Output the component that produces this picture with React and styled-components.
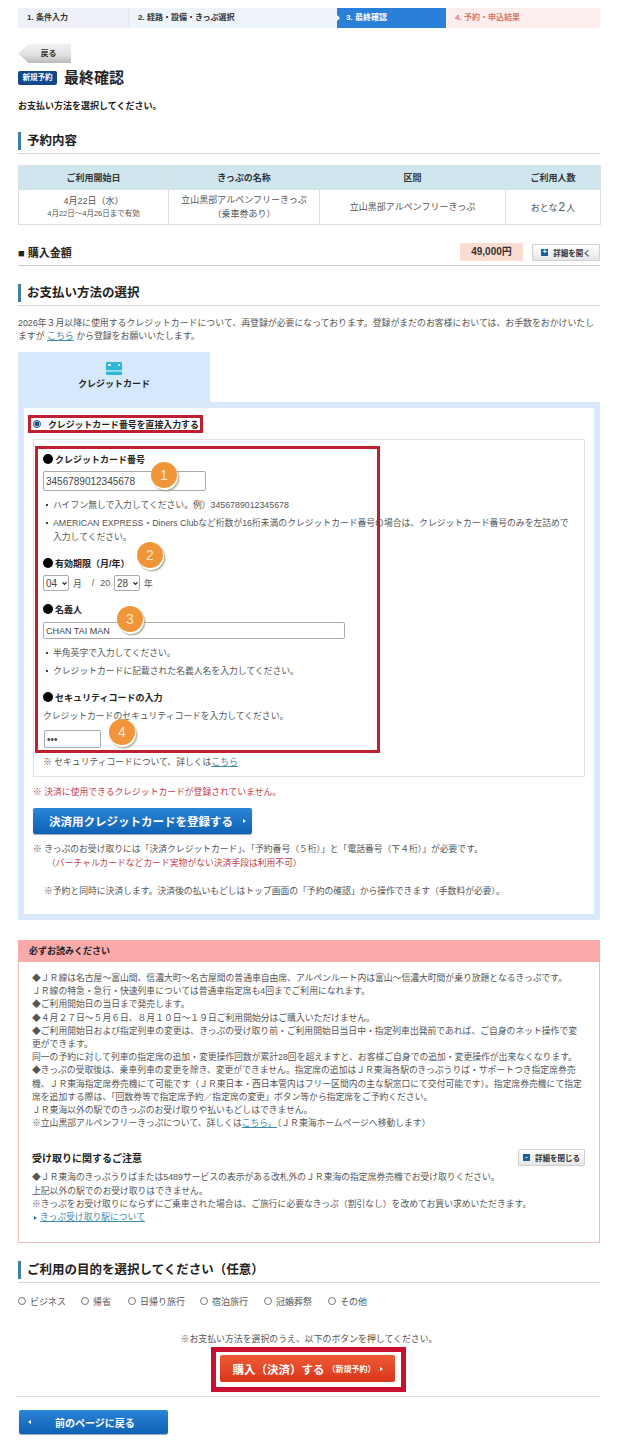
import React from "react";
import styled, { createGlobalStyle } from "styled-components";
import { ChevronDown } from "lucide-react";

const Global = createGlobalStyle`
  html, body { margin: 0; padding: 0; background: #fff; }
  body { font-family: "Liberation Sans", "Noto Sans CJK JP", sans-serif; color: #555; font-size: 8.8px; }
  * { box-sizing: border-box; }
`;

const Page = styled.div`
  width: 620px;
  padding: 8px 20px 7px 18px;
`;

const Steps = styled.ol`
  display: flex;
  height: 20px;
  margin: 0;
  padding: 0;
  list-style: none;
`;
const Step = styled.li`
  position: relative;
  width: ${p => p.$w}px;
  padding-left: 9px;
  background: ${p => p.$bg};
  color: ${p => p.$fg};
  border-left: ${p => (p.$sep ? "1px solid #e3e8f0" : "none")};
  font-size: 8px;
  font-weight: 700;
  line-height: 20px;
  ${p => p.$active && `
    &::before, &::after {
      content: "";
      position: absolute;
      top: 7px;
      border: 3px solid transparent;
      border-left-color: #2a80d8;
    }
    &::before { left: 0; border-left-color: #fff; }
    &::after { right: -6px; }
  `}
`;

const BackTab = styled.button`
  display: block;
  width: 53px;
  height: 19px;
  margin-top: 16px;
  padding: 0 0 2px 8px;
  border: 0;
  background: linear-gradient(#f1f1f1, #e3e3e3 55%, #b9b9b9);
  clip-path: polygon(0 50%, 20% 0, 100% 0, 100% 100%, 20% 100%);
  color: #333;
  font: 700 8px "Liberation Sans", "Noto Sans CJK JP", sans-serif;
`;

const TitleRow = styled.div`
  display: flex;
  align-items: center;
  gap: 7px;
  height: 14px;
  margin-top: 8px;
`;
const Badge = styled.span`
  width: 39px;
  height: 14px;
  background: #12478c;
  border-radius: 2px;
  color: #fff;
  font-size: 7.5px;
  font-weight: 700;
  line-height: 14px;
  text-align: center;
`;
const Title = styled.h1`
  margin: 0;
  color: #222;
  font-size: 15px;
  font-weight: 700;
  line-height: 14px;
`;
const Lead = styled.p`
  margin: 15px 0 0;
  color: #222;
  font-size: 9px;
  font-weight: 700;
  line-height: 12px;
`;

const Heading = styled.h2`
  margin: ${p => p.$top}px 0 0;
  padding-bottom: 3px;
  border-bottom: 1px solid #d8d8d8;
  color: #222;
  font-size: 12.5px;
  font-weight: 700;
  line-height: 18px;
`;
const HeadingText = styled.span`
  display: block;
  padding-left: 6px;
  border-left: 3px solid #3f7fa8;
`;

const Table = styled.table`
  width: 582px;
  margin-top: 11px;
  border-collapse: collapse;
  table-layout: fixed;
  text-align: center;
`;
const Th = styled.th`
  width: ${p => p.$w}px;
  height: 24px;
  padding: 0;
  background: #cfe6ef;
  border: 1px solid #d9e3e6;
  color: #333;
  font-size: 9px;
  font-weight: 700;
`;
const Td = styled.td`
  height: 35px;
  padding: 0;
  border: 1px solid #d9dde0;
  color: #555;
  font-size: 9px;
  line-height: 14px;
`;
const Small = styled.small`
  display: block;
  font-size: 7.5px;
  line-height: 12px;
`;
const BigNum = styled.span`
  margin: 0 1px;
  font-size: 12px;
`;

const PriceRow = styled.div`
  display: flex;
  align-items: center;
  height: 23px;
  margin-top: 18px;
  padding-bottom: 4px;
  border-bottom: 1px solid #c8c8c8;
`;
const PriceLabel = styled.h3`
  flex: 1;
  margin: 0;
  color: #222;
  font-size: 11px;
  font-weight: 700;
`;
const Price = styled.span`
  width: 63px;
  height: 18px;
  margin-right: 9px;
  background: #fbdcd0;
  border-radius: 2px;
  color: #333;
  font-size: 10px;
  font-weight: 700;
  line-height: 18px;
  text-align: center;
`;
const DetailBtn = styled.button`
  display: flex;
  align-items: center;
  justify-content: center;
  gap: 5px;
  width: ${p => p.$w}px;
  height: ${p => p.$h}px;
  padding: 0;
  background: linear-gradient(#fff, #e6e6e6);
  border: 1px solid #d0d0d0;
  border-radius: 1px;
  color: #333;
  font: 700 7.5px "Liberation Sans", "Noto Sans CJK JP", sans-serif;
`;
const ToggleIcon = styled.span`
  width: 7px;
  height: 7px;
  background: #1c5f9e;
  color: #fff;
  font-size: 7px;
  line-height: 6px;
  text-align: center;
`;

const Para = styled.p`
  margin: 11px 0 0;
  color: #555;
  font-size: 8.9px;
  line-height: 13px;
  white-space: nowrap;
`;
const A = styled.a`
  color: #3f8aa8;
  text-decoration: underline;
`;

const Tab = styled.div`
  display: flex;
  flex-direction: column;
  align-items: center;
  width: 192px;
  height: 50px;
  margin-top: 9px;
  padding-top: 10px;
  background: #d6e8fb;
  color: #222;
  font-size: 9px;
  font-weight: 700;
  line-height: 12px;
`;
const TabLabel = styled.span`
  margin-top: 3px;
`;

const Panel = styled.section`
  padding: 7px 9px 16px 9px;
  border: 6px solid #d9e8fb;
`;
const RadioRow = styled.label`
  display: flex;
  align-items: center;
  gap: 7px;
  width: 175px;
  height: 18px;
  margin-left: -5px;
  padding-left: 2px;
  border: 3px solid #bf2030;
  color: #222;
  font-size: 8.9px;
  font-weight: 700;
  white-space: nowrap;
`;
const Radio = styled.input`
  flex: none;
  width: 8px;
  height: 8px;
  margin: 0;
  accent-color: #1c4f8e;
`;
const Box = styled.div`
  position: relative;
  margin-top: 6px;
  padding: 13px 8px 7px 9px;
  border: 1px solid #e2e2e2;
`;
const RedFrame = styled.div`
  position: absolute;
  left: 1px;
  top: 6px;
  width: 345px;
  height: 307px;
  border: 3px solid #bf2030;
  pointer-events: none;
`;
const Circle = styled.span`
  position: absolute;
  left: ${p => p.$x}px;
  top: ${p => p.$y}px;
  width: 26px;
  height: 26px;
  background: #f0953a;
  border-radius: 50%;
  box-shadow: 1px 2px 0 #fff, 2px 3px 2px #9a9a7a;
  color: #fbe6c8;
  font-size: 14px;
  line-height: 26px;
  text-align: center;
`;
const FieldLabel = styled.div`
  display: flex;
  align-items: center;
  height: 12px;
  margin-top: ${p => p.$top || 0}px;
  color: #222;
  font-size: 9px;
  font-weight: 700;
`;
const Dot = styled.span`
  width: 10px;
  height: 10px;
  margin-right: 2px;
  background: #000;
  border-radius: 50%;
`;
const TextInput = styled.input`
  display: block;
  width: ${p => p.$w}px;
  height: ${p => p.$h}px;
  margin: ${p => p.$top}px 0 0 ${p => p.$left || 0}px;
  padding: 0 2px;
  background: #fff;
  border: 1px solid #aaa;
  border-radius: 2px;
  color: #444;
  font: ${p => p.$fs || 10}px "Liberation Sans", sans-serif;
`;
const Bullets = styled.ul`
  margin: 7px 0 0;
  padding: 0 0 0 10px;
  list-style: none;
  line-height: 14px;
  white-space: nowrap;
`;
const Bullet = styled.li`
  position: relative;
  & + & { margin-top: 4px; }
  &::before {
    content: "";
    position: absolute;
    left: -7px;
    top: 6px;
    width: 2px;
    height: 2px;
    background: #444;
  }
`;
const DateRow = styled.div`
  display: flex;
  align-items: center;
  height: 16px;
  margin-top: 6px;
  gap: 4px;
`;
const SelectWrap = styled.span`
  position: relative;
  display: block;
  width: 26px;
  height: 16px;
  color: #222;
  & > svg {
    position: absolute;
    right: 1px;
    top: 5px;
    pointer-events: none;
  }
`;
const Select = styled.select`
  display: block;
  width: 100%;
  height: 100%;
  padding: 0 0 0 2px;
  appearance: none;
  background: #fff;
  border: 1px solid #aaa;
  border-radius: 2px;
  color: #444;
  font: 10px "Liberation Sans", sans-serif;
`;
const Sep = styled.span`
  margin: 0 2px 0 6px;
`;
const Line = styled.p`
  margin: ${p => p.$top || 0}px 0 0 ${p => p.$left || 0}px;
  color: ${p => (p.$red ? "#c0404f" : "#555")};
  line-height: 14px;
`;
const RedSpan = styled.span`
  display: block;
  padding-left: 14px;
  color: #c0404f;
`;
const BlueBtn = styled.button`
  display: flex;
  align-items: center;
  width: ${p => p.$w}px;
  height: ${p => p.$h}px;
  margin-top: ${p => p.$top}px;
  padding: 0 0 0 ${p => p.$pad}px;
  background: linear-gradient(#2a84d8, #0f62b4);
  border: 0;
  border-radius: 2px;
  box-shadow: 0 1px 1px #9ab;
  color: #fff;
  font: 700 ${p => p.$fs}px "Liberation Sans", "Noto Sans CJK JP", sans-serif;
`;
const Tri = styled.i`
  flex: none;
  width: 0;
  height: 0;
  border: 2.5px solid transparent;
  ${p => (p.$left
    ? `border-right: 3px solid #fff; margin-right: 24px; border-left: 0;`
    : `border-left: 3px solid #fff; margin-left: ${p.$m}px; border-right: 0;`)}
`;

const Notice = styled.section`
  margin-top: 20px;
  padding-bottom: 18px;
  border: 1px solid #f1bcbc;
  border-top: 0;
`;
const NoticeHead = styled.h3`
  height: 22px;
  margin: 0 -1px;
  padding-left: 11px;
  background: #fbaaaa;
  color: #222;
  font-size: 9px;
  font-weight: 700;
  line-height: 22px;
`;
const NoticeText = styled.div`
  margin-top: ${p => p.$top}px;
  padding: 0 13px;
  color: #555;
  line-height: 13.2px;
  white-space: nowrap;
`;
const NoticeSubHead = styled.div`
  display: flex;
  align-items: center;
  justify-content: space-between;
  height: 17px;
  margin-top: 19px;
  padding: 0 14px 0 13px;
  color: #222;
  font-size: 10px;
  font-weight: 700;
`;
const LinkTri = styled.i`
  display: inline-block;
  margin: 0 3px 0 2px;
  border: 2px solid transparent;
  border-left: 3px solid #2a6fa8;
  border-right: 0;
`;

const Purposes = styled.div`
  display: flex;
  height: 16px;
  margin-top: 10px;
  font-size: 9px;
`;
const Purpose = styled.label`
  display: flex;
  align-items: center;
  gap: 4px;
  width: ${p => p.$w}px;
`;
const CenterNote = styled.p`
  margin: 24px 0 0;
  font-size: 8.9px;
  line-height: 12px;
  text-align: center;
`;
const BuyFrame = styled.div`
  width: 195px;
  height: 45px;
  margin: 2px 0 0 193px;
  padding: 3px 4px;
  border: 5px solid #c8102e;
`;
const BuyBtn = styled.button`
  display: flex;
  align-items: center;
  justify-content: center;
  width: 175px;
  height: 27px;
  padding: 0;
  background: linear-gradient(#ee5a34, #d9371c);
  border: 0;
  border-radius: 2px;
  color: #fff;
  font: 700 11.5px "Liberation Sans", "Noto Sans CJK JP", sans-serif;
`;
const BuySub = styled.span`
  margin-left: 3px;
  font-size: 8px;
`;
const Divider = styled.hr`
  height: 1px;
  margin: 4px 0 0 -2px;
  border: 0;
  background: #e0e0e0;
`;
const BackWrap = styled.div`
  margin-left: 1px;
`;

const CardIcon = () => (
  <svg width="16" height="13" viewBox="0 0 16 13" aria-hidden="true">
    <rect width="16" height="13" rx="1" fill="#2fb5d8" />
    <rect y="8" width="16" height="2" fill="#8fdcec" />
    <rect x="2" y="2" width="3" height="2" fill="#d8f4fa" />
    <rect x="12" y="2" width="2" height="2" fill="#d8f4fa" />
  </svg>
);

const Toggle = ({ open, children, w, h }) => (
  <DetailBtn $w={w} $h={h} type="button">
    <ToggleIcon>{open ? "-" : "+"}</ToggleIcon>
    {children}
  </DetailBtn>
);

const DateSelect = ({ value }) => (
  <SelectWrap>
    <Select defaultValue={value}><option>{value}</option></Select>
    <ChevronDown size={7} strokeWidth={4} />
  </SelectWrap>
);

export default function App() {
  return (
    <Page>
      <Global />
      <Steps>
        <Step $w={110} $bg="#eef1f8" $fg="#333">1. 条件入力</Step>
        <Step $w={209} $bg="#eff4fb" $fg="#333" $sep>2. 経路・設備・きっぷ選択</Step>
        <Step $w={109} $bg="#2a80d8" $fg="#fff" $active>3. 最終確認</Step>
        <Step $w={154} $bg="#fdeeee" $fg="#d77a6a">4. 予約・申込結果</Step>
      </Steps>

      <BackTab type="button">戻る</BackTab>
      <TitleRow>
        <Badge>新規予約</Badge>
        <Title>最終確認</Title>
      </TitleRow>
      <Lead>お支払い方法を選択してください。</Lead>

      <Heading $top={20}><HeadingText>予約内容</HeadingText></Heading>
      <Table>
        <thead>
          <tr>
            <Th $w={150}>ご利用開始日</Th>
            <Th $w={151}>きっぷの名称</Th>
            <Th $w={186}>区間</Th>
            <Th $w={95}>ご利用人数</Th>
          </tr>
        </thead>
        <tbody>
          <tr>
            <Td>4月22日（水）<Small>4月22日～4月26日まで有効</Small></Td>
            <Td>立山黒部アルペンフリーきっぷ<br />（乗車券あり）</Td>
            <Td>立山黒部アルペンフリーきっぷ</Td>
            <Td>おとな<BigNum>2</BigNum>人</Td>
          </tr>
        </tbody>
      </Table>

      <PriceRow>
        <PriceLabel>■ 購入金額</PriceLabel>
        <Price>49,000円</Price>
        <Toggle w={68} h={17}>詳細を開く</Toggle>
      </PriceRow>

      <Heading $top={18}><HeadingText>お支払い方法の選択</HeadingText></Heading>
      <Para>
        2026年３月以降に使用するクレジットカードについて、再登録が必要になっております。登録がまだのお客様においては、お手数をおかけいたし<br />
        ますが <A href="#">こちら</A> から登録をお願いいたします。
      </Para>

      <Tab>
        <CardIcon />
        <TabLabel>クレジットカード</TabLabel>
      </Tab>
      <Panel>
        <RadioRow>
          <Radio type="radio" name="pay" defaultChecked />
          クレジットカード番号を直接入力する
        </RadioRow>
        <Box>
          <FieldLabel><Dot />クレジットカード番号</FieldLabel>
          <TextInput $w={163} $h={20} $top={6} defaultValue="3456789012345678" />
          <Bullets>
            <Bullet>ハイフン無しで入力してください。例）3456789012345678</Bullet>
            <Bullet>AMERICAN EXPRESS・Diners Clubなど桁数が16桁未満のクレジットカード番号の場合は、クレジットカード番号のみを左詰めで<br />入力してください。</Bullet>
          </Bullets>

          <FieldLabel $top={13}><Dot />有効期限（月/年）</FieldLabel>
          <DateRow>
            <DateSelect value="04" />
            月<Sep>/</Sep>20
            <DateSelect value="28" />
            年
          </DateRow>

          <FieldLabel $top={12}><Dot />名義人</FieldLabel>
          <TextInput $w={302} $h={17} $top={7} $fs={9} defaultValue="CHAN TAI MAN" />
          <Bullets>
            <Bullet>半角英字で入力してください。</Bullet>
            <Bullet>クレジットカードに記載された名義人名を入力してください。</Bullet>
          </Bullets>

          <FieldLabel $top={13}><Dot />セキュリティコードの入力</FieldLabel>
          <Line $top={6}>クレジットカードのセキュリティコードを入力してください。</Line>
          <TextInput type="password" $w={57} $h={18} $top={7} $left={1} defaultValue="123" />
          <Line $top={7}>※ セキュリティコードについて、詳しくは<A href="#">こちら</A></Line>

          <RedFrame />
          <Circle $x={117} $y={22}>1</Circle>
          <Circle $x={103} $y={102}>2</Circle>
          <Circle $x={83} $y={166}>3</Circle>
          <Circle $x={75} $y={279}>4</Circle>
        </Box>

        <Line $top={8} $red>※ 決済に使用できるクレジットカードが登録されていません。</Line>
        <BlueBtn type="button" $w={219} $h={26} $top={9} $pad={16} $fs={11.5}>
          決済用クレジットカードを登録する<Tri $m={10} />
        </BlueBtn>
        <Line $top={8}>
          ※ きっぷのお受け取りには「決済クレジットカード」、「予約番号（５桁）」と「電話番号（下４桁）」が必要です。
          <RedSpan>（バーチャルカードなどカード実物がない決済手段は利用不可）</RedSpan>
        </Line>
        <Line $top={14} $left={11}>※予約と同時に決済します。決済後の払いもどしはトップ画面の「予約の確認」から操作できます（手数料が必要）。</Line>
      </Panel>

      <Notice>
        <NoticeHead>必ずお読みください</NoticeHead>
        <NoticeText $top={10}>
          ◆ＪＲ線は名古屋～富山間、信濃大町～名古屋間の普通車自由席、アルペンルート内は富山～信濃大町間が乗り放題となるきっぷです。<br />
          ＪＲ線の特急・急行・快速列車については普通車指定席も4回までご利用になれます。<br />
          ◆ご利用開始日の当日まで発売します。<br />
          ◆４月２７日～５月６日、８月１０日～１９日ご利用開始分はご購入いただけません。<br />
          ◆ご利用開始日および指定列車の変更は、きっぷの受け取り前・ご利用開始日当日中・指定列車出発前であれば、ご自身のネット操作で変<br />
          更ができます。<br />
          同一の予約に対して列車の指定席の追加・変更操作回数が累計28回を超えますと、お客様ご自身での追加・変更操作が出来なくなります。<br />
          ◆きっぷの受取後は、乗車列車の変更を除き、変更ができません。指定席の追加はＪＲ東海各駅のきっぷうりば・サポートつき指定席券売<br />
          機、ＪＲ東海指定席券売機にて可能です（ＪＲ東日本・西日本管内はフリー区間内の主な駅窓口にて交付可能です）。指定席券売機にて指定<br />
          席を追加する際は、「回数券等で指定席予約／指定席の変更」ボタン等から指定席をご予約ください。<br />
          ＪＲ東海以外の駅でのきっぷのお受け取りや払いもどしはできません。<br />
          ※立山黒部アルペンフリーきっぷについて、詳しくは<A href="#">こちら。</A>（ＪＲ東海ホームページへ移動します）
        </NoticeText>
        <NoticeSubHead>
          受け取りに関するご注意
          <Toggle open w={67} h={17}>詳細を閉じる</Toggle>
        </NoticeSubHead>
        <NoticeText $top={5}>
          ◆ＪＲ東海のきっぷうりばまたは5489サービスの表示がある改札外のＪＲ東海の指定席券売機でお受け取りください。<br />
          上記以外の駅でのお受け取りはできません。<br />
          ※きっぷをお受け取りにならずにご乗車された場合は、ご旅行に必要なきっぷ（割引なし）を改めてお買い求めいただきます。<br />
          <LinkTri /><A href="#">きっぷ受け取り駅について</A>
        </NoticeText>
      </Notice>

      <Heading $top={18}><HeadingText>ご利用の目的を選択してください（任意）</HeadingText></Heading>
      <Purposes>
        <Purpose $w={63}><Radio type="radio" name="p" />ビジネス</Purpose>
        <Purpose $w={47}><Radio type="radio" name="p" />帰省</Purpose>
        <Purpose $w={72}><Radio type="radio" name="p" />日帰り旅行</Purpose>
        <Purpose $w={64}><Radio type="radio" name="p" />宿泊旅行</Purpose>
        <Purpose $w={64}><Radio type="radio" name="p" />冠婚葬祭</Purpose>
        <Purpose $w={60}><Radio type="radio" name="p" />その他</Purpose>
      </Purposes>

      <CenterNote>※お支払い方法を選択のうえ、以下のボタンを押してください。</CenterNote>
      <BuyFrame>
        <BuyBtn type="button">購入（決済）する<BuySub>（新規予約）</BuySub><Tri $m={4} /></BuyBtn>
      </BuyFrame>
      <Divider />
      <BackWrap>
        <BlueBtn type="button" $w={149} $h={24} $top={13} $pad={9} $fs={10}>
          <Tri $left />前のページに戻る
        </BlueBtn>
      </BackWrap>
    </Page>
  );
}
